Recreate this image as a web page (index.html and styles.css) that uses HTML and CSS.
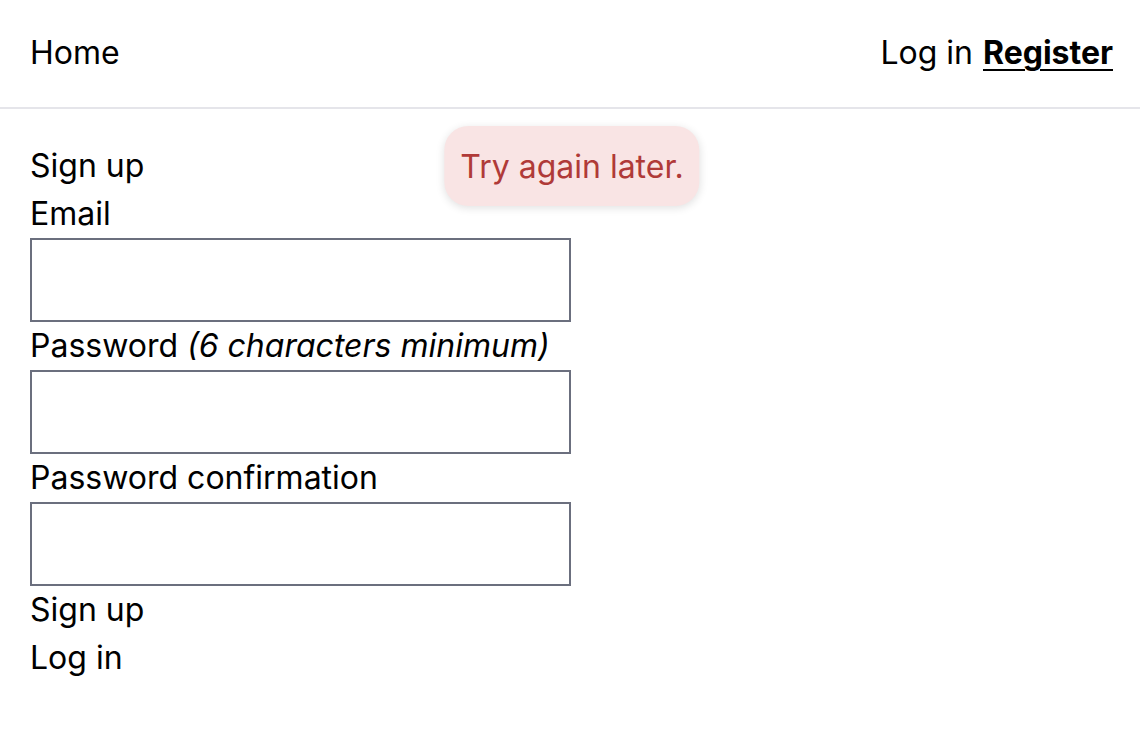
FILE: index.html
```html
<!DOCTYPE html>
<html lang="en">
<head>
<meta charset="utf-8">
<title>Sign up</title>
<link rel="stylesheet" href="styles.css">
</head>
<body>
<header class="topbar">
  <a class="nav-link" href="#">Home</a>
  <nav class="nav-right">
    <a class="nav-link" href="#">Log in</a>
    <a class="nav-link current" href="#">Register</a>
  </nav>
</header>
<div class="toast">Try again later.</div>
<main class="content">
  <h2 class="title">Sign up</h2>
  <form class="form">
    <label class="label" for="email">Email</label>
    <input class="field" id="email" type="email">
    <label class="label" for="pw">Password <em>(6 characters minimum)</em></label>
    <input class="field" id="pw" type="password">
    <label class="label" for="pwc">Password confirmation</label>
    <input class="field" id="pwc" type="password">
    <button class="submit" type="submit">Sign up</button>
  </form>
  <a class="link" href="#">Log in</a>
</main>
</body>
</html>
```
FILE: styles.css
```css
* { box-sizing: border-box; }
html, body {
  margin: 0;
  padding: 0;
  background: #ffffff;
  color: #000000;
  font-family: Inter, "Noto Sans", sans-serif;
  font-size: 32px;
  line-height: 48px;
}
a { color: inherit; text-decoration: none; }
.topbar {
  height: 109px;
  display: flex;
  align-items: center;
  justify-content: space-between;
  padding: 0 27px 1px 30px;
  border-bottom: 2px solid #e5e5ea;
}
.nav-right { display: flex; gap: 10px; }
.nav-link.current { font-weight: 700; text-decoration: underline; text-underline-offset: 5px; text-decoration-thickness: 2px; }
.content {
  padding: 33px 30px;
  display: flex;
  flex-direction: column;
  align-items: flex-start;
}
.title { margin: 0; font-size: 32px; font-weight: 400; line-height: 48px; }
.form { display: flex; flex-direction: column; align-items: flex-start; }
.label { display: block; }
.label em { font-style: italic; }
.field {
  width: 541px;
  height: 84px;
  border: 2px solid #6b6f7e;
  border-radius: 0;
  background: #ffffff;
  margin: 0;
  font: inherit;
}
.submit {
  margin: 0;
  padding: 0;
  border: none;
  background: none;
  font: inherit;
  line-height: 48px;
  color: inherit;
}
.toast {
  position: absolute;
  top: 126px;
  left: calc(50% + 2px);
  transform: translateX(-50%);
  padding: 17px 16px 15px;
  background: #f9e4e4;
  color: #b03a38;
  border-radius: 24px;
  box-shadow: 0 2px 8px rgba(0,0,0,0.12);
  white-space: nowrap;
}
```
